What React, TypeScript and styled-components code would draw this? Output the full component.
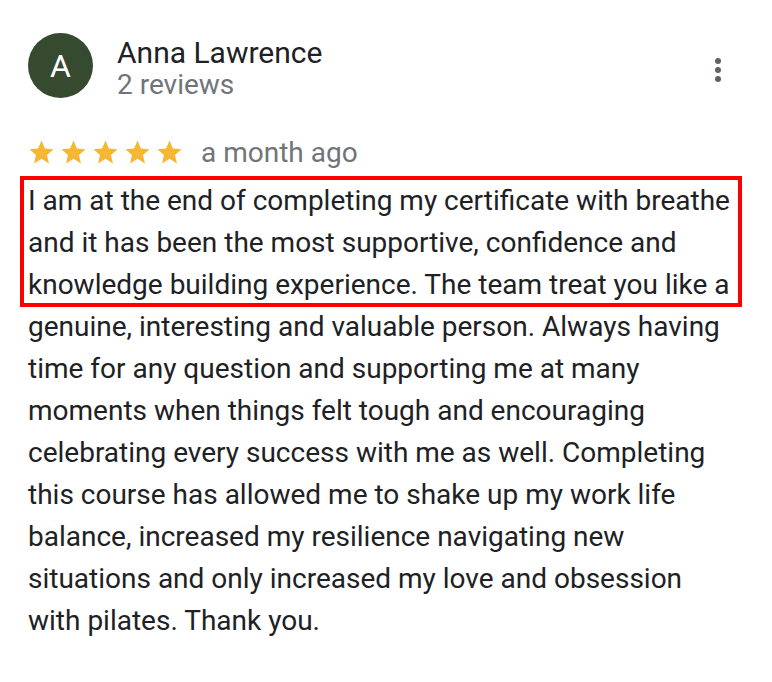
import React from "react";
import styled, { createGlobalStyle } from "styled-components";

const Global = createGlobalStyle`
  html, body { margin: 0; padding: 0; background: #ffffff; }
  body { font-family: Roboto, "Noto Sans", Arial, sans-serif; }
`;

const Page = styled.div`
  width: 772px;
  height: 682px;
  box-sizing: border-box;
  padding: 33px 0 0 28px;
  position: relative;
  background: #fff;
  overflow: hidden;
`;

const Header = styled.div`
  display: flex;
  align-items: flex-start;
`;

const Avatar = styled.div`
  width: 65px;
  height: 65px;
  border-radius: 50%;
  background: #354a2f;
  color: #fff;
  display: flex;
  align-items: center;
  justify-content: center;
  font-size: 32px;
  font-weight: 400;
  flex-shrink: 0;
`;

const Info = styled.div`
  display: flex;
  flex-direction: column;
  margin-left: 24px;
  margin-top: 4px;
`;

const Name = styled.div`
  font-size: 30px;
  line-height: 32px;
  color: #202124;
`;

const Sub = styled.div`
  font-size: 28px;
  line-height: 32px;
  color: #70757a;
`;

const Menu = styled.button`
  margin-left: auto;
  margin-right: 36px;
  margin-top: 19px;
  width: 36px;
  height: 36px;
  border: none;
  background: none;
  padding: 0;
  display: flex;
  align-items: center;
  justify-content: center;
`;

const RatingRow = styled.div`
  display: flex;
  align-items: center;
  height: 32px;
  margin-top: 35px;
`;

const Stars = styled.div`
  display: flex;
  gap: 3px;
  margin-left: -1px;
`;

const When = styled.span`
  margin-left: 17px;
  font-size: 28px;
  color: #70757a;
`;

const Body = styled.div`
  position: relative;
  margin-top: 12px;
  font-size: 28px;
  line-height: 42px;
  color: #202124;
`;

const Line = styled.span`
  display: block;
  white-space: nowrap;
`;

const Highlight = styled.div`
  position: absolute;
  top: -4px;
  left: -8px;
  width: 722px;
  height: 131px;
  box-sizing: border-box;
  border: 4px solid #ff0000;
  pointer-events: none;
`;

const Star = () => (
  <svg width="29" height="29" viewBox="0 0 24 24" aria-hidden="true">
    <path
      fill="#f5b631"
      d="M12 17.27L18.18 21l-1.64-7.03L22 9.24l-7.19-.61L12 2 9.19 8.63 2 9.24l5.46 4.73L5.82 21z"
    />
  </svg>
);

const lines = [
  "I am at the end of completing my certificate with breathe",
  "and it has been the most supportive, confidence and",
  "knowledge building experience. The team treat you like a",
  "genuine, interesting and valuable person. Always having",
  "time for any question and supporting me at many",
  "moments when things felt tough and encouraging",
  "celebrating every success with me as well. Completing",
  "this course has allowed me to shake up my work life",
  "balance, increased my resilience navigating new",
  "situations and only increased my love and obsession",
  "with pilates. Thank you.",
];

export default function App() {
  return (
    <>
      <Global />
      <Page>
        <Header>
          <Avatar>A</Avatar>
          <Info>
            <Name>Anna Lawrence</Name>
            <Sub>2 reviews</Sub>
          </Info>
          <Menu aria-label="More">
            <svg width="36" height="36" viewBox="0 0 36 36">
              <circle cx="18" cy="9" r="3" fill="#5f6368" />
              <circle cx="18" cy="18" r="3" fill="#5f6368" />
              <circle cx="18" cy="27" r="3" fill="#5f6368" />
            </svg>
          </Menu>
        </Header>
        <RatingRow>
          <Stars>
            {[0, 1, 2, 3, 4].map((i) => (
              <Star key={i} />
            ))}
          </Stars>
          <When>a month ago</When>
        </RatingRow>
        <Body>
          {lines.map((l, i) => (
            <Line key={i}>{l}</Line>
          ))}
          <Highlight />
        </Body>
      </Page>
    </>
  );
}
